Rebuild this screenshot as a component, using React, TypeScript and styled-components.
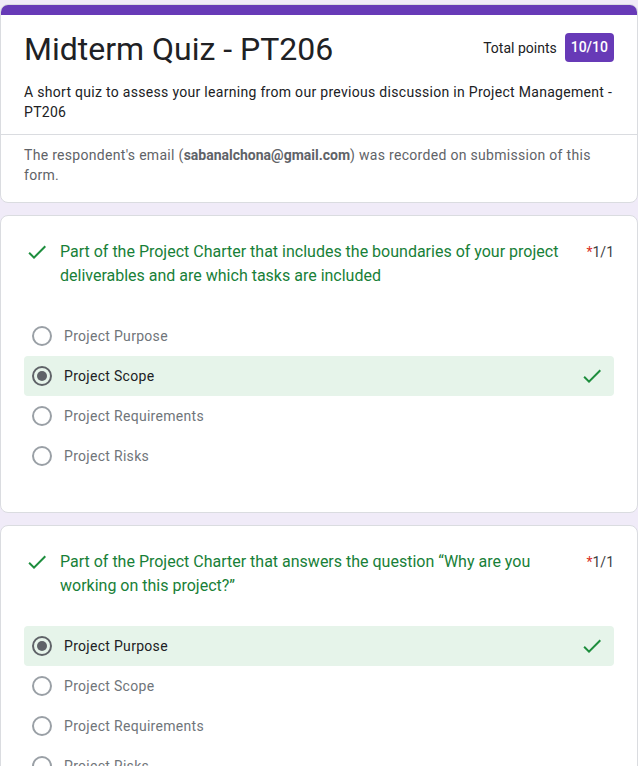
import React from "react";
import styled, { createGlobalStyle } from "styled-components";

const Global = createGlobalStyle`
  html, body { margin: 0; padding: 0; background: #f0ebf8; }
  body { font-family: Roboto, "Noto Sans", Arial, sans-serif; color: #202124; }
`;

const Page = styled.div`
  display: flex;
  flex-direction: column;
  gap: 12px;
  padding-top: 4px;
`;

const Card = styled.section`
  background: #fff;
  border: 1px solid #dadce0;
  border-radius: 8px;
  overflow: hidden;
`;

const TopBar = styled.div`
  height: 10px;
  background: #673ab7;
`;

const HeaderMain = styled.div`
  padding: 12px 23px 12px 23px;
`;

const TitleRow = styled.div`
  display: flex;
  align-items: flex-start;
  justify-content: space-between;
`;

const Title = styled.h1`
  margin: 0;
  font-size: 32px;
  font-weight: 400;
  line-height: 44px;
  color: #202124;
`;

const Points = styled.div`
  display: flex;
  align-items: center;
  gap: 8px;
  margin-top: 6px;
  font-size: 14px;
  color: #202124;
`;

const Badge = styled.span`
  background: #673ab7;
  color: #fff;
  border-radius: 4px;
  font-size: 14px;
  font-weight: 500;
  padding: 0 6px;
  height: 29px;
  line-height: 29px;
`;

const Description = styled.p`
  margin: 11px 0 0 0;
  font-size: 14px;
  line-height: 20px;
  letter-spacing: 0.3px;
  color: #202124;
`;

const Divider = styled.div`
  height: 1px;
  background: #dadce0;
`;

const EmailNote = styled.p`
  margin: 0;
  padding: 10px 23px 17px 23px;
  font-size: 14px;
  line-height: 20px;
  letter-spacing: 0.3px;
  color: #5f6368;
  b { font-weight: 700; color: #5f6368; letter-spacing: 0; }
`;

const QuestionBody = styled.div`
  padding: 24px 23px 36px 23px;
`;

const QuestionHead = styled.div`
  display: flex;
  align-items: flex-start;
  gap: 11px;
`;

const CheckBox = styled.span`
  flex: none;
  display: flex;
  width: 24px;
  height: 24px;
  margin-left: 1px;
  svg { display: block; }
`;

const QuestionText = styled.div`
  flex: 1;
  font-size: 16px;
  line-height: 24px;
  color: #188038;
  padding-right: 6px;
`;

const Score = styled.div`
  flex: none;
  font-size: 14px;
  line-height: 24px;
  color: #3c4043;
  span { color: #d93025; }
`;

const Options = styled.div`
  margin-top: 28px;
  display: flex;
  flex-direction: column;
`;

const OptionRow = styled.div<{ $correct?: boolean }>`
  display: flex;
  align-items: center;
  height: 40px;
  padding: 0 10px 0 8px;
  border-radius: 4px;
  background: ${(p) => (p.$correct ? "#e6f4ea" : "transparent")};
`;

const Radio = styled.span<{ $checked?: boolean }>`
  flex: none;
  box-sizing: border-box;
  width: 20px;
  height: 20px;
  border-radius: 50%;
  border: 2px solid ${(p) => (p.$checked ? "#5f6368" : "#9aa0a6")};
  display: flex;
  align-items: center;
  justify-content: center;
  &::after {
    content: "";
    display: ${(p) => (p.$checked ? "block" : "none")};
    width: 10px;
    height: 10px;
    border-radius: 50%;
    background: #5f6368;
  }
`;

const OptionLabel = styled.span<{ $checked?: boolean }>`
  flex: 1;
  margin-left: 12px;
  font-size: 14px;
  letter-spacing: 0.3px;
  color: ${(p) => (p.$checked ? "#202124" : "#70757a")};
`;

const Check = ({ size = 24 }: { size?: number }) => (
  <svg width={size} height={size} viewBox="0 0 24 24" fill="#1e8e3e">
    <path d="M9 16.17L4.83 12l-1.42 1.41L9 19 21 7l-1.41-1.41z" />
  </svg>
);

type Q = { text: string; options: string[]; selected: number };

const questions: Q[] = [
  {
    text: "Part of the Project Charter that includes the boundaries of your project deliverables and are which tasks are included",
    options: ["Project Purpose", "Project Scope", "Project Requirements", "Project Risks"],
    selected: 1,
  },
  {
    text: "Part of the Project Charter that answers the question \u201cWhy are you working on this project?\u201d",
    options: ["Project Purpose", "Project Scope", "Project Requirements", "Project Risks"],
    selected: 0,
  },
];

export default function App() {
  return (
    <>
      <Global />
      <Page>
        <Card>
          <TopBar />
          <HeaderMain>
            <TitleRow>
              <Title>Midterm Quiz - PT206</Title>
              <Points>
                Total points <Badge>10/10</Badge>
              </Points>
            </TitleRow>
            <Description>
              A short quiz to assess your learning from our previous discussion in Project Management - PT206
            </Description>
          </HeaderMain>
          <Divider />
          <EmailNote>
            The respondent's email (<b>sabanalchona@gmail.com</b>) was recorded on submission of this form.
          </EmailNote>
        </Card>
        {questions.map((q, qi) => (
          <Card key={qi}>
            <QuestionBody>
              <QuestionHead>
                <CheckBox>
                  <Check />
                </CheckBox>
                <QuestionText>{q.text}</QuestionText>
                <Score>
                  <span>*</span>1/1
                </Score>
              </QuestionHead>
              <Options>
                {q.options.map((o, oi) => {
                  const sel = oi === q.selected;
                  return (
                    <OptionRow key={oi} $correct={sel}>
                      <Radio $checked={sel} />
                      <OptionLabel $checked={sel}>{o}</OptionLabel>
                      {sel && <Check />}
                    </OptionRow>
                  );
                })}
              </Options>
            </QuestionBody>
          </Card>
        ))}
      </Page>
    </>
  );
}
